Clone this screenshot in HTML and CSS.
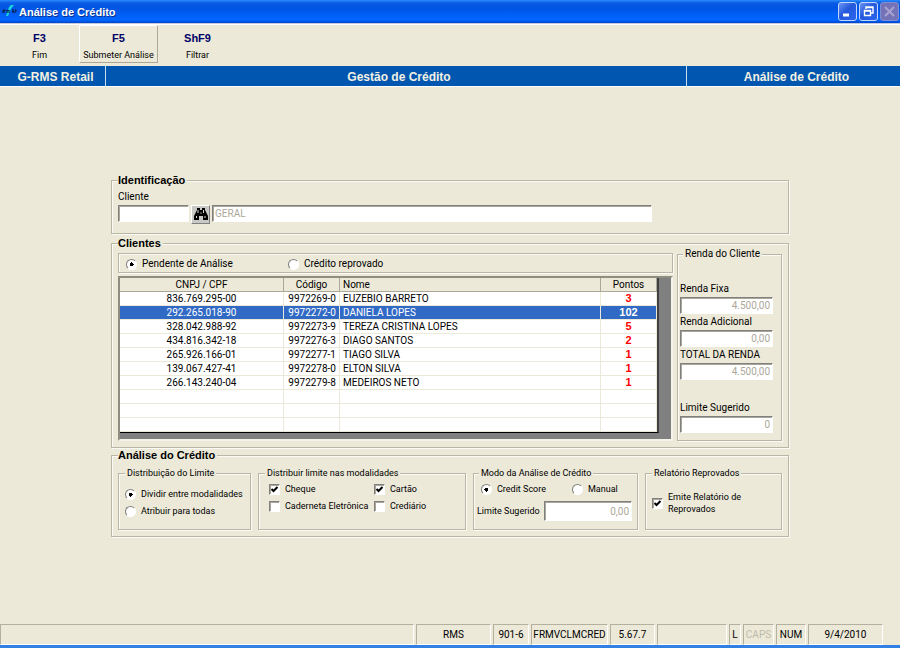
FILE: index.html
```
<!DOCTYPE html>
<html lang="pt-BR">
<head>
<meta charset="UTF-8" />
<meta name="viewport" content="width=device-width, initial-scale=1" />
<title>Análise de Crédito</title>
<link rel="stylesheet" href="styles.css">
</head>
<body>

<header class="titlebar">
  <svg class="app-icon" width="15" height="13" viewBox="0 0 15 13">
    <path d="M4 12 L7 3 L9 1 L12 1 L9 5 L6 12 Z" fill="#19d3dc"/>
    <path d="M1 9V6H3V7H2V9M5 9V6L6 7L7 6V9M10 6H12M10 7L12 8H10M13 6H14V8H12" fill="none" stroke="#08213a" stroke-width="1"/>
  </svg>
  <h1>Análise de Crédito</h1>
  <div class="window-buttons">
    <button aria-label="Minimizar">
      <svg width="17" height="17" viewBox="0 0 17 17"><path d="M4 12H10" stroke="#fff" stroke-width="3"/></svg>
    </button>
    <button aria-label="Restaurar">
      <svg width="17" height="17" viewBox="0 0 17 17"><path d="M6 6V4H13V10H11M6 4.5H13M4.5 7.5H10.5V12.5H4.5ZM4 8H11" fill="none" stroke="#fff" stroke-width="1.4"/></svg>
    </button>
    <button aria-label="Fechar" class="close" disabled>
      <svg width="17" height="17" viewBox="0 0 17 17"><path d="M4 4L13 13M13 4L4 13" stroke="#a9a4cf" stroke-width="2"/></svg>
    </button>
  </div>
</header>

<nav class="toolbar">
  <button><b>F3</b><span>Fim</span></button>
  <button class="raised"><b>F5</b><span>Submeter Análise</span></button>
  <button><b>ShF9</b><span>Filtrar</span></button>
</nav>

<div class="band">
  <div>G-RMS Retail</div>
  <div>Gestão de Crédito</div>
  <div>Análise de Crédito</div>
</div>

<main>
  <form class="panel">

    <!-- Identificação -->
    <fieldset class="group ident">
      <legend>Identificação</legend>
      <label for="cliente">Cliente</label>
      <div class="ident-row">
        <input type="text" id="cliente" class="code" />
        <button type="button" class="search" aria-label="Procurar cliente">
          <svg width="14" height="13" viewBox="0 0 14 13">
            <path d="M3 0H6V2H8V0H11V2L12 4L14 8V12H9V8H5V12H0V8L2 4L3 2Z" fill="#000"/>
            <path d="M4 2V5M9.500 2V5M2.500 8V10M11 8V10" stroke="#d8d8d8" stroke-width="1"/>
            <path d="M7 4V6" stroke="#888" stroke-width="1"/>
          </svg>
        </button>
        <input type="text" class="name" value="GERAL" aria-label="Nome do cliente" disabled />
      </div>
    </fieldset>

    <!-- Clientes -->
    <fieldset class="group clients">
      <legend>Clientes</legend>
      <div class="clients-grid">
        <div class="clients-list">
          <div class="status-filter">
            <label><input type="radio" name="situacao" checked /> Pendente de Análise</label>
            <label><input type="radio" name="situacao" /> Crédito reprovado</label>
          </div>
          <div class="table-box">
            <table>
              <colgroup>
                <col class="col-cpf"><col class="col-cod"><col><col class="col-pts">
              </colgroup>
              <thead>
                <tr><th>CNPJ / CPF</th><th>Código</th><th class="left">Nome</th><th>Pontos</th></tr>
              </thead>
              <tbody>
                <tr><td>836.769.295-00</td><td>9972269-0</td><td>EUZEBIO BARRETO</td><td>3</td></tr>
                <tr class="selected"><td>292.265.018-90</td><td>9972272-0</td><td>DANIELA LOPES</td><td>102</td></tr>
                <tr><td>328.042.988-92</td><td>9972273-9</td><td>TEREZA CRISTINA LOPES</td><td>5</td></tr>
                <tr><td>434.816.342-18</td><td>9972276-3</td><td>DIAGO SANTOS</td><td>2</td></tr>
                <tr><td>265.926.166-01</td><td>9972277-1</td><td>TIAGO SILVA</td><td>1</td></tr>
                <tr><td>139.067.427-41</td><td>9972278-0</td><td>ELTON SILVA</td><td>1</td></tr>
                <tr><td>266.143.240-04</td><td>9972279-8</td><td>MEDEIROS NETO</td><td>1</td></tr>
                <tr><td></td><td></td><td></td><td></td></tr>
                <tr><td></td><td></td><td></td><td></td></tr>
                <tr><td></td><td></td><td></td><td></td></tr>
              </tbody>
            </table>
          </div>
        </div>

        <fieldset class="income">
          <legend>Renda do Cliente</legend>
          <div class="field">
            <label for="fixa">Renda Fixa</label>
            <input type="text" id="fixa" value="4.500,00" disabled />
          </div>
          <div class="field">
            <label for="adicional">Renda Adicional</label>
            <input type="text" id="adicional" value="0,00" disabled />
          </div>
          <div class="field">
            <label for="total">TOTAL DA RENDA</label>
            <input type="text" id="total" value="4.500,00" disabled />
          </div>
          <div class="field limit">
            <label for="limite">Limite Sugerido</label>
            <input type="text" id="limite" value="0" disabled />
          </div>
        </fieldset>
      </div>
    </fieldset>

    <!-- Análise do Crédito -->
    <fieldset class="group analysis">
      <legend>Análise do Crédito</legend>
      <div class="analysis-grid">
        <fieldset class="distribution">
          <legend>Distribuição do Limite</legend>
          <label><input type="radio" name="dist" checked /> Dividir entre modalidades</label>
          <label><input type="radio" name="dist" /> Atribuir para todas</label>
        </fieldset>

        <fieldset class="modes">
          <legend>Distribuir limite nas modalidades</legend>
          <div class="modes-grid">
            <label><input type="checkbox" checked /> Cheque</label>
            <label><input type="checkbox" checked /> Cartão</label>
            <label><input type="checkbox" /> Caderneta Eletrônica</label>
            <label><input type="checkbox" /> Crediário</label>
          </div>
        </fieldset>

        <fieldset class="method">
          <legend>Modo da Análise de Crédito</legend>
          <div class="method-options">
            <label><input type="radio" name="modo" checked /> Credit Score</label>
            <label><input type="radio" name="modo" /> Manual</label>
          </div>
          <div class="method-limit">
            <label for="sugerido">Limite Sugerido</label>
            <input type="text" id="sugerido" value="0,00" disabled />
          </div>
        </fieldset>

        <fieldset class="report">
          <legend>Relatório Reprovados</legend>
          <label><input type="checkbox" checked /> <span>Emite Relatório de Reprovados</span></label>
        </fieldset>
      </div>
    </fieldset>

  </form>
</main>

<footer class="statusbar">
  <div></div>
  <div>RMS</div>
  <div>901-6</div>
  <div>FRMVCLMCRED</div>
  <div>5.67.7</div>
  <div></div>
  <div>L</div>
  <div class="off">CAPS</div>
  <div>NUM</div>
  <div>9/4/2010</div>
</footer>

</body>
</html>
```
FILE: styles.css
```
* {
  box-sizing: border-box;
}
body {
  margin: 0;
  min-height: 100vh;
  display: flex;
  flex-direction: column;
  background: #ece9d8;
  border-bottom: 3px solid #3180e4;
  color: #000;
  font: 10px/12px Roboto, sans-serif;
}
button,
input {
  font: inherit;
  color: inherit;
  margin: 0;
}

/* title bar */
.titlebar {
  display: flex;
  align-items: center;
  gap: 2px;
  height: 24px;
  padding: 0 1px 0 2px;
  border-bottom: 1px solid #c4c9dc;
  background: linear-gradient(#2a8bfb 0, #0a5ce6 3px, #0054e3 8px, #0061fb 16px, #0066ff 20px, #0046c8 23px);
}
.titlebar h1 {
  flex: 1;
  margin: 0;
  color: #fff;
  font: bold 11px/14px "Liberation Sans", sans-serif;
  text-shadow: 1px 1px 0 #0a2f8c;
}
.app-icon {
  margin-bottom: 2px;
}
.window-buttons {
  display: flex;
  gap: 2px;
}
.window-buttons button {
  display: flex;
  width: 19px;
  height: 19px;
  padding: 0;
  border: 1px solid #c3d5fa;
  border-radius: 3px;
  background: linear-gradient(135deg, #6b95f3, #2458dc 45%, #2a66ee);
}
.window-buttons .close {
  border-color: #7f8fd6;
  background: #7573b8;
}

/* toolbar */
.toolbar {
  display: flex;
  height: 42px;
  padding-bottom: 3px;
  border-top: 1px solid #fff;
}
.toolbar button {
  display: flex;
  flex-direction: column;
  align-items: center;
  gap: 5px;
  width: 79px;
  padding: 6px 0 0;
  border: 1px solid transparent;
  background: none;
  font-size: 9px;
  white-space: nowrap;
}
.toolbar b {
  color: #000066;
  font: bold 11px/12px "Liberation Sans", sans-serif;
}
.toolbar .raised {
  border-color: #fff #aca899 #aca899 #fff;
}

/* section band */
.band {
  display: grid;
  grid-template-columns: 106px 1fr 213px;
  border-bottom: 1px solid #fff;
  background: #0157b0;
  color: #f4f1e2;
  font: bold 12px/18px "Liberation Sans", sans-serif;
  text-align: center;
}
.band div {
  padding-left: 6px;
  padding-top: 2px;
  border-right: 1px solid #c9dcec;
}
.band div:last-child {
  border-right: none;
}

/* groups */
main {
  flex: 1;
  display: flex;
  align-items: center;
  justify-content: center;
}
.panel {
  width: 100%;
  max-width: 678px;
}
fieldset {
  min-width: 0;
  margin: 0;
  padding: 0 6px;
  border: 1px solid #b9b6a6;
  box-shadow: 1px 1px 0 #fbfaf4, inset 1px 1px 0 #fbfaf4;
}
legend {
  padding: 0 2px;
  background: #ece9d8;
  white-space: nowrap;
}
.group > legend {
  padding-left: 0;
  font: bold 11px/12px "Liberation Sans", sans-serif;
}
label {
  white-space: nowrap;
}

/* inputs */
input[type="text"] {
  width: 100%;
  height: 17px;
  padding: 0 2px;
  border: 1px solid;
  border-color: #808080 #fff #fff #808080;
  box-shadow: inset 1px 1px 0 #a9a697;
  background: #fff;
}
input:disabled {
  color: #aca899;
}
input[type="radio"],
input[type="checkbox"] {
  appearance: none;
  flex: none;
  width: 11px;
  height: 11px;
  border: 1px solid;
  border-color: #808080 #fff #fff #808080;
  background: #fff;
}
input[type="radio"] {
  border-radius: 50%;
}
input[type="radio"]:checked {
  background: radial-gradient(circle, #000 0, #000 2px, #fff 2px);
}
input[type="checkbox"] {
  box-shadow: inset 1px 1px 0 #a9a697;
}
input[type="checkbox"]:checked {
  background: #fff url("data:image/svg+xml,%3Csvg xmlns='http://www.w3.org/2000/svg' viewBox='0 0 9 9'%3E%3Cpath d='M1.500 4L3.500 6L7.500 2' fill='none' stroke='%23000' stroke-width='2'/%3E%3C/svg%3E");
}
label:has(input) {
  display: flex;
  align-items: center;
  gap: 5px;
}

/* identificacao */
.ident {
  margin-bottom: 3px;
  padding-top: 5px;
  padding-bottom: 9px;
}
.ident > label {
  display: block;
  margin-bottom: 2px;
}
.ident-row {
  display: flex;
  gap: 2px;
}
.ident-row .code {
  width: 71px;
}
.ident-row .name {
  flex: 0 1 440px;
}
.search {
  display: flex;
  align-items: center;
  justify-content: center;
  width: 19px;
  height: 19px;
  padding: 0;
  border: 1px solid;
  border-color: #fff #808080 #808080 #fff;
  background: #c8c8c4;
}

/* clientes */
.clients {
  margin-bottom: 1px;
  padding-bottom: 6px;
}
.clients-grid {
  display: grid;
  grid-template-columns: minmax(0, 1fr) 105px;
  gap: 4px;
}
.clients-list {
  padding-top: 4px;
}
.status-filter {
  display: grid;
  grid-template-columns: 162px 1fr;
  margin-bottom: 3px;
  padding: 4px 7px 2px;
  border: 1px solid #b9b6a6;
  box-shadow: 1px 1px 0 #fbfaf4, inset 1px 1px 0 #fbfaf4;
}
.table-box {
  padding: 0 12px 6px 0;
  border: 2px solid;
  border-color: #8f8d80 #f5f3ea #f5f3ea #8f8d80;
  background: #808080;
}
table {
  width: 100%;
  table-layout: fixed;
  border-collapse: separate;
  border-spacing: 0;
  border-right: 2px solid #404040;
  border-bottom: 1px solid #000;
  background: #fff;
}
.col-cpf {
  width: 164px;
}
.col-cod {
  width: 56px;
}
.col-pts {
  width: 56px;
}
th,
td {
  height: 14px;
  padding: 0 3px;
  border-right: 1px solid #ece9d8;
  border-bottom: 1px solid #ece9d8;
  line-height: 13px;
  white-space: nowrap;
}
th {
  border-color: #aca899;
  background: #ece9d8;
  font-weight: normal;
}
th.left {
  text-align: left;
}
td:first-child {
  text-align: center;
}
td:nth-child(2) {
  text-align: right;
}
td:last-child {
  color: #f00;
  font: bold 11px/13px "Liberation Sans", sans-serif;
  text-align: center;
}
.selected td,
.selected td:last-child {
  background: #316ac5;
  color: #fff;
}

/* renda do cliente */
.income {
  display: flex;
  flex-direction: column;
  padding: 0 8px 6px 2px;
}
.income legend {
  margin-left: 3px;
  line-height: 10px;
}
.field {
  margin-bottom: 2px;
}
.field:first-of-type {
  margin-top: 24px;
}
.field label {
  display: block;
  margin-bottom: 2px;
}
.field input {
  display: block;
  text-align: right;
}
.field.limit {
  margin-top: 20px;
  margin-bottom: 0;
}

/* analise do credito */
.analysis {
  padding-top: 6px;
  padding-bottom: 6px;
}
.analysis-grid {
  display: grid;
  grid-template-columns: 133fr 208fr 165fr 137fr;
  gap: 7px;
}
.analysis-grid fieldset {
  min-height: 63px;
}
.analysis-grid legend,
.analysis-grid label {
  font-size: 9px;
}
.distribution label {
  margin-top: 9px;
}
.distribution label + label {
  margin-top: 5px;
}
.modes-grid {
  display: grid;
  grid-template-columns: 105px 1fr;
  row-gap: 5px;
  padding: 4px 0 0 4px;
}
.method {
  padding: 0 5px 0 3px;
}
.method legend {
  margin-left: 2px;
}
.method-options {
  display: grid;
  grid-template-columns: 91px 1fr;
  padding: 4px 0 0 4px;
}
.method-limit {
  display: flex;
  align-items: center;
  gap: 4px;
  margin-top: 6px;
}
.method-limit input[type="text"] {
  flex: 1;
  min-width: 0;
  height: 20px;
  text-align: right;
}
.report label {
  margin-top: 12px;
}
.report span {
  white-space: normal;
}

/* status bar */
.statusbar {
  display: grid;
  grid-template-columns: 1fr 75px 36px 77px 45px 70px 12px 31px 30px 75px;
  gap: 2px;
  padding-right: 17px;
}
.statusbar div {
  height: 21px;
  border: 1px solid;
  border-color: #b3b0a0 #fff #fff #b3b0a0;
  line-height: 19px;
  text-align: center;
}
.statusbar .off {
  color: #bdb9a8;
}
```
